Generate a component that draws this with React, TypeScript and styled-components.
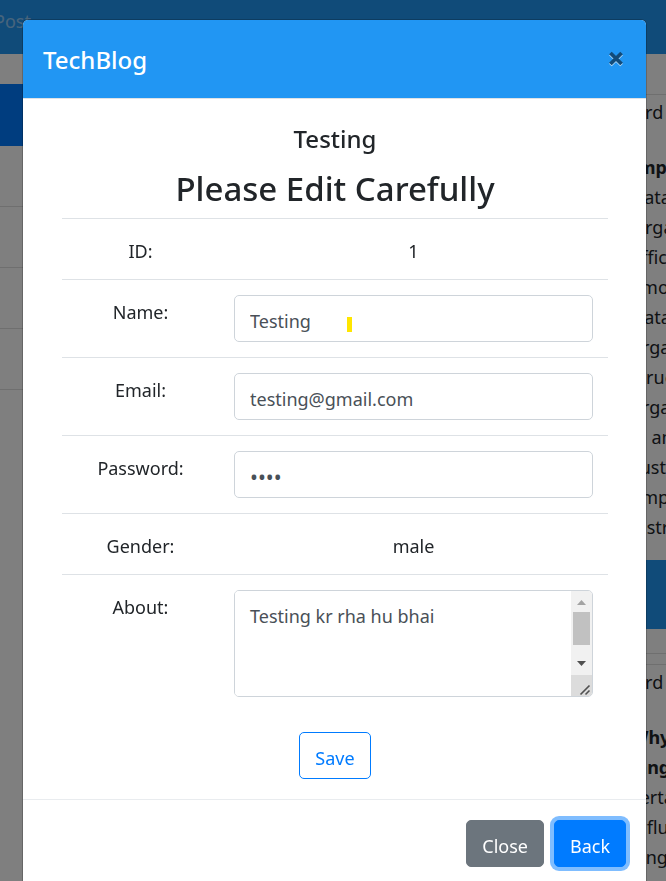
import React from 'react';
import styled, { createGlobalStyle } from 'styled-components';

const GlobalStyle = createGlobalStyle`
  *, *::before, *::after { box-sizing: border-box; }
  body {
    margin: 0;
    background: #fff;
    color: #212529;
    font: 400 18px/30px "Noto Sans", "Open Sans", sans-serif;
  }
`;

const Page = styled.div`
  height: 100vh;
  overflow: hidden;
  display: flex;
  flex-direction: column;
`;

const Navbar = styled.nav`
  height: 54px;
  flex: none;
  background: #2196f3;
  display: flex;
  align-items: flex-start;
  padding-top: 6px;
`;

const NavLink = styled.a`
  width: 31px;
  display: flex;
  justify-content: flex-end;
  color: rgba(255, 255, 255, 0.5);
  text-decoration: none;
  white-space: nowrap;
`;

const Columns = styled.main`
  flex: 1;
  display: flex;
  justify-content: space-between;
`;

const Sidebar = styled.div`
  width: 33%;
  margin-top: 30px;
`;

const Category = styled.a<{ $active?: boolean }>`
  display: block;
  height: ${(p) => (p.$active ? 62 : 61)}px;
  padding: 15px 25px;
  border-bottom: 1px solid ${(p) => (p.$active ? '#007bff' : '#dfdfdf')};
  background: ${(p) => (p.$active ? '#007bff' : '#fff')};
  color: ${(p) => (p.$active ? '#fff' : '#495057')};
  text-decoration: none;
`;

const Posts = styled.div`
  width: 35px;
  flex: none;
  margin-top: 40px;
  overflow: hidden;
  white-space: nowrap;
`;

const Post = styled.article`
  border-top: 1px solid #dfdfdf;
  border-bottom: 1px solid #dfdfdf;
  margin-bottom: 10px;
`;

const PostHeading = styled.p`
  margin: 0;
  padding: 2px 0 25px;
`;

const PostLine = styled.p<{ $bold?: boolean }>`
  margin: 0;
  font-weight: ${(p) => (p.$bold ? 700 : 400)};
`;

const PostFooter = styled.div`
  height: 69px;
  margin: 18px 0 24px;
  background: #2196f3;
`;

const Overlay = styled.div`
  position: fixed;
  inset: 0;
  overflow: hidden;
  background: rgba(0, 0, 0, 0.5);
  padding: 19px 19px 0 22px;
`;

const Dialog = styled.section`
  max-width: 625px;
  margin: 0 auto;
  background: #fff;
  background-clip: padding-box;
  border: 1px solid rgba(0, 0, 0, 0.2);
  border-radius: 6px;
`;

const DialogHeader = styled.header`
  display: flex;
  justify-content: space-between;
  align-items: flex-start;
  padding: 21px 20px 19px;
  color: #fff;
  background: #2196f3;
  border-bottom: 1px solid #dee2e6;
  border-radius: 5px 5px 0 0;
`;

const DialogTitle = styled.h1`
  margin: 0;
  font-size: 24px;
  line-height: 38px;
  font-weight: 500;
`;

const CloseIconButton = styled.button`
  display: flex;
  padding: 10px 3px;
  border: 0;
  background: transparent;
  color: #114b7a;
  cursor: pointer;
`;

const DialogBody = styled.div`
  padding: 25px 38px 20px 39px;
  text-align: center;
`;

const UserName = styled.h2`
  margin: 0 0 14px;
  font-size: 24px;
  line-height: 30px;
  font-weight: 500;
`;

const FormTitle = styled.h3`
  margin: 0 0 8px;
  font-size: 33px;
  line-height: 42px;
  font-weight: 500;
`;

const FieldTable = styled.table`
  width: 100%;
  border-collapse: collapse;
`;

const LabelCell = styled.th`
  width: 157px;
  padding: 17px 15px 13px;
  border-top: 1px solid #dee2e6;
  font-weight: 400;
  vertical-align: top;
`;

const ValueCell = styled.td`
  padding: 15px;
  border-top: 1px solid #dee2e6;
  vertical-align: top;
`;

const TextValue = styled.span`
  display: block;
  padding-top: 4px;
  line-height: 26px;
`;

const Field = styled.div`
  position: relative;
  display: flex;
`;

const Input = styled.input`
  width: 100%;
  height: 47px;
  padding: 10px 15px 6px;
  border: 1px solid #ced4da;
  border-radius: 5px;
  color: #495057;
  background: #fff;
  font: inherit;
  outline: 0;

  &[type='password'] {
    font-size: 21px;
  }
`;

const Caret = styled.span`
  position: absolute;
  left: 113px;
  top: 22px;
  width: 5px;
  height: 15px;
  background: #ffe600;
`;

const TextAreaFrame = styled.div`
  display: flex;
  height: 107px;
  overflow: hidden;
  border: 1px solid #ced4da;
  border-radius: 5px;
`;

const TextArea = styled.textarea`
  flex: 1;
  min-width: 0;
  padding: 10px 15px 6px;
  border: 0;
  resize: none;
  overflow: hidden;
  outline: 0;
  color: #495057;
  font: inherit;
`;

const ScrollRail = styled.div`
  width: 21px;
  display: flex;
  flex-direction: column;
  align-items: center;
  background: #f1f1f1;
`;

const ScrollArrow = styled.svg`
  display: block;
  flex: none;
`;

const ScrollThumb = styled.div`
  width: 17px;
  height: 33px;
  background: #c1c1c1;
`;

const ResizeCorner = styled.svg`
  display: block;
  margin-top: auto;
  background: #dcdcdc;
`;

const SaveRow = styled.div`
  display: flex;
  justify-content: center;
  padding: 20px 0 0;
`;

const Button = styled.button<{ $kind: 'outline' | 'secondary' | 'primary' }>`
  height: 47px;
  padding: 5px 15px 0;
  border: 1px solid ${(p) => (p.$kind === 'secondary' ? '#6c757d' : '#007bff')};
  border-radius: 5px;
  font: inherit;
  color: ${(p) => (p.$kind === 'outline' ? '#007bff' : '#fff')};
  background: ${(p) =>
    p.$kind === 'outline' ? '#fff' : p.$kind === 'secondary' ? '#6c757d' : '#007bff'};
  box-shadow: ${(p) => (p.$kind === 'primary' ? '0 0 0 4px rgba(0, 123, 255, 0.5)' : 'none')};
  cursor: pointer;
`;

const DialogFooter = styled.footer`
  display: flex;
  justify-content: flex-end;
  gap: 10px;
  padding: 20px;
  border-top: 1px solid #e9ecef;
`;

const firstPost = ['Data', 'Orga', 'effic', 'amo', 'Data', 'orga', 'struc', 'orga', 'in an', 'custe', 'emp', 'distr'];
const secondPost = ['certa', 'influ', 'lang', 'algor'];

export default function App() {
  return (
    <>
      <GlobalStyle />
      <Page>
        <Navbar>
          <NavLink href="#post">Do Post</NavLink>
        </Navbar>
        <Columns>
          <Sidebar>
            <Category href="#all" $active />
            <Category href="#c1" />
            <Category href="#c2" />
            <Category href="#c3" />
            <Category href="#c4" />
          </Sidebar>
          <Posts>
            <Post>
              <PostHeading>Ord</PostHeading>
              <PostLine $bold>Impo</PostLine>
              {firstPost.map((line, i) => (
                <PostLine key={i}>{line}</PostLine>
              ))}
              <PostFooter />
            </Post>
            <Post>
              <PostHeading>Ord</PostHeading>
              <PostLine $bold>Why</PostLine>
              <PostLine $bold>lang</PostLine>
              {secondPost.map((line, i) => (
                <PostLine key={i}>{line}</PostLine>
              ))}
            </Post>
          </Posts>
        </Columns>
      </Page>

      <Overlay>
        <Dialog role="dialog" aria-modal="true" aria-labelledby="dialog-title">
          <DialogHeader>
            <DialogTitle id="dialog-title">TechBlog</DialogTitle>
            <CloseIconButton type="button" aria-label="Close dialog">
              <svg width="14" height="16" viewBox="0 0 14 16">
                <path d="M1.4 3 12.6 14M12.6 3 1.4 14" stroke="#fff" strokeOpacity="0.7" strokeWidth="3.8" />
                <path d="M1.4 2 12.6 13M12.6 2 1.4 13" stroke="currentColor" strokeWidth="3.8" />
              </svg>
            </CloseIconButton>
          </DialogHeader>

          <DialogBody>
            <UserName>Testing</UserName>
            <FormTitle>Please Edit Carefully</FormTitle>
            <FieldTable>
              <tbody>
                <tr>
                  <LabelCell scope="row">ID:</LabelCell>
                  <ValueCell><TextValue>1</TextValue></ValueCell>
                </tr>
                <tr>
                  <LabelCell scope="row"><label htmlFor="name">Name:</label></LabelCell>
                  <ValueCell>
                    <Field>
                      <Input id="name" type="text" defaultValue="Testing" />
                      <Caret />
                    </Field>
                  </ValueCell>
                </tr>
                <tr>
                  <LabelCell scope="row"><label htmlFor="email">Email:</label></LabelCell>
                  <ValueCell>
                    <Field><Input id="email" type="email" defaultValue="testing@gmail.com" /></Field>
                  </ValueCell>
                </tr>
                <tr>
                  <LabelCell scope="row"><label htmlFor="password">Password:</label></LabelCell>
                  <ValueCell>
                    <Field><Input id="password" type="password" defaultValue="1234" /></Field>
                  </ValueCell>
                </tr>
                <tr>
                  <LabelCell scope="row">Gender:</LabelCell>
                  <ValueCell><TextValue>male</TextValue></ValueCell>
                </tr>
                <tr>
                  <LabelCell scope="row"><label htmlFor="about">About:</label></LabelCell>
                  <ValueCell>
                    <TextAreaFrame>
                      <TextArea id="about" defaultValue="Testing kr rha hu bhai" />
                      <ScrollRail aria-hidden="true">
                        <ScrollArrow width="21" height="21" viewBox="0 0 21 21">
                          <path d="M6 14 10.5 9 15 14Z" fill="#a3a3a3" />
                        </ScrollArrow>
                        <ScrollThumb />
                        <ScrollArrow width="21" height="30" viewBox="0 0 21 30">
                          <path d="M6 16H15L10.5 21Z" fill="#505050" />
                        </ScrollArrow>
                        <ResizeCorner width="21" height="21" viewBox="0 0 21 21">
                          <path d="M9.5 19.5 18.5 10.5M14.5 19.5 18.5 15.5" stroke="#505050" strokeWidth="1.6" />
                        </ResizeCorner>
                      </ScrollRail>
                    </TextAreaFrame>
                  </ValueCell>
                </tr>
              </tbody>
            </FieldTable>
            <SaveRow>
              <Button type="button" $kind="outline">Save</Button>
            </SaveRow>
          </DialogBody>

          <DialogFooter>
            <Button type="button" $kind="secondary">Close</Button>
            <Button type="button" $kind="primary">Back</Button>
          </DialogFooter>
        </Dialog>
      </Overlay>
    </>
  );
}
